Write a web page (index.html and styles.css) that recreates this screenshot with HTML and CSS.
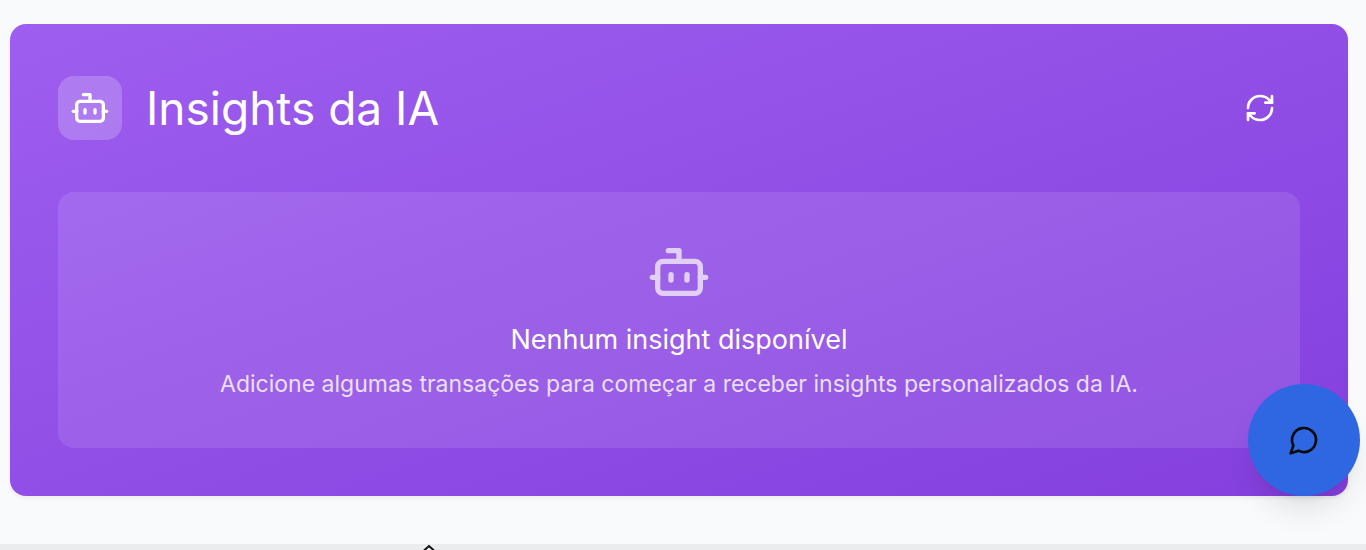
FILE: index.html
```html
<!DOCTYPE html>
<html lang="pt-BR">
<head>
<meta charset="utf-8">
<meta name="viewport" content="width=device-width, initial-scale=1">
<title>Insights da IA</title>
<link rel="stylesheet" href="styles.css">
</head>
<body>
<main class="page">
  <section class="card" aria-labelledby="insights-title">
    <header class="card-header">
      <div class="heading">
        <span class="badge">
          <svg class="icon icon-md" viewBox="0 0 24 24" aria-hidden="true"><path d="M12 8V4H8"/><rect width="16" height="12" x="4" y="8" rx="2"/><path d="M2 14h2"/><path d="M20 14h2"/><path d="M15 13v2"/><path d="M9 13v2"/></svg>
        </span>
        <h2 class="title" id="insights-title">Insights da IA</h2>
      </div>
      <button class="refresh" type="button" aria-label="Atualizar insights">
        <svg class="icon icon-sm" viewBox="0 0 24 24" aria-hidden="true"><path d="M3 12a9 9 0 0 1 9-9 9.75 9.75 0 0 1 6.74 2.74L21 8"/><path d="M21 3v5h-5"/><path d="M21 12a9 9 0 0 1-9 9 9.75 9.75 0 0 1-6.74-2.74L3 16"/><path d="M8 16H3v5"/></svg>
      </button>
    </header>
    <div class="empty">
      <svg class="icon icon-lg" viewBox="0 0 24 24" aria-hidden="true"><path d="M12 8V4H8"/><rect width="16" height="12" x="4" y="8" rx="2"/><path d="M2 14h2"/><path d="M20 14h2"/><path d="M15 13v2"/><path d="M9 13v2"/></svg>
      <p class="empty-title">Nenhum insight disponível</p>
      <p class="empty-text">Adicione algumas transações para começar a receber insights personalizados da IA.</p>
    </div>
  </section>
</main>
<div class="bottom-bar">
  <svg class="caret" viewBox="0 0 12 6" aria-hidden="true"><path d="M1 6.500 6 2l5 4.500"/></svg>
</div>
<button class="chat" type="button" aria-label="Abrir chat">
  <svg class="icon icon-sm" viewBox="0 0 24 24" aria-hidden="true"><path d="M7.900 20A9 9 0 1 0 4 16.100L2 22Z"/></svg>
</button>
</body>
</html>
```
FILE: styles.css
```css
* {
  box-sizing: border-box;
}

body {
  margin: 0;
  min-height: 100vh;
  display: flex;
  flex-direction: column;
  background: #f9fafc;
  font-family: Inter, "Liberation Sans", sans-serif;
  overflow: hidden;
}

.page {
  flex: 1;
  padding: 24px 18px 48px 10px;
}

.card {
  padding: 48px;
  border-radius: 16px;
  background: linear-gradient(to bottom right, #9e5eef, #843fde);
  box-shadow: 0 2px 4px rgba(0, 0, 0, 0.06);
  color: #fff;
}

.card-header {
  display: flex;
  align-items: center;
  justify-content: space-between;
  margin-bottom: 48px;
}

.heading {
  display: flex;
  align-items: center;
  gap: 24px;
}

.badge {
  display: flex;
  padding: 12px;
  border-radius: 16px;
  background: rgba(255, 255, 255, 0.2);
}

.title {
  margin: 0;
  font-size: 46px;
  line-height: 48px;
  font-weight: 400;
}

.refresh {
  display: flex;
  align-items: center;
  justify-content: center;
  width: 80px;
  height: 72px;
  border: 0;
  border-radius: 12px;
  background: transparent;
  color: inherit;
  cursor: pointer;
}

.icon {
  display: block;
  fill: none;
  stroke: currentColor;
  stroke-width: 2;
  stroke-linecap: round;
  stroke-linejoin: round;
}

.icon-sm {
  width: 32px;
  height: 32px;
}

.icon-md {
  width: 40px;
  height: 40px;
}

.icon-lg {
  width: 64px;
  height: 64px;
  margin-bottom: 16px;
  opacity: 0.7;
}

.empty {
  display: flex;
  flex-direction: column;
  align-items: center;
  padding: 48px;
  border-radius: 16px;
  background: rgba(255, 255, 255, 0.1);
  text-align: center;
}

.empty-title {
  margin: 0 0 8px;
  font-size: 27px;
  line-height: 40px;
}

.empty-text {
  margin: 0;
  font-size: 23px;
  line-height: 32px;
  opacity: 0.8;
}

.bottom-bar {
  height: 6px;
  padding-left: 423px;
  background: #ebecee;
}

.caret {
  display: block;
  width: 12px;
  height: 6px;
  fill: none;
  stroke: #111;
  stroke-width: 2;
}

.chat {
  position: fixed;
  right: 6px;
  bottom: 54px;
  display: flex;
  align-items: center;
  justify-content: center;
  width: 112px;
  height: 112px;
  border: 0;
  border-radius: 50%;
  background: #2f67e2;
  box-shadow: 0 20px 30px -6px rgba(0, 0, 0, 0.1), 0 8px 12px -8px rgba(0, 0, 0, 0.1);
  color: #0a0a0f;
  cursor: pointer;
}
```
